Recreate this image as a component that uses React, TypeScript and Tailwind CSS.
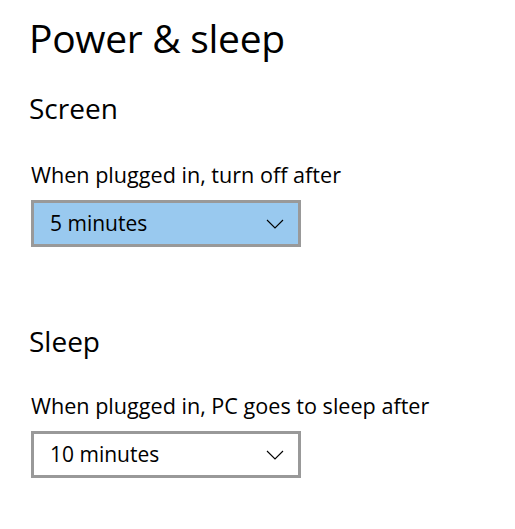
const font = { fontFamily: '"Open Sans", "Noto Sans", sans-serif' };

function Chevron() {
  return (
    <svg width="18" height="10" viewBox="0 0 18 10" fill="none" className="shrink-0">
      <path d="M1 1 L9 9 L17 1" stroke="#000" strokeWidth="1.1" />
    </svg>
  );
}

function Dropdown({ value, active }: { value: string; active?: boolean }) {
  return (
    <div
      className={`flex items-center justify-between w-[270px] h-[47px] border-[3px] border-[#999999] pl-[16px] pr-[14px] ${
        active ? 'bg-[#99c9ef]' : 'bg-white'
      }`}
    >
      <span className="text-[21px] text-black leading-none">{value}</span>
      <Chevron />
    </div>
  );
}

export default function App() {
  return (
    <div className="w-[515px] h-[529px] bg-white text-black pl-[29px] pt-[12px]" style={font}>
      <h1 className="text-[39px] leading-[52px] font-normal tracking-[-0.3px]">Power &amp; sleep</h1>

      <h2 className="mt-[26px] text-[28px] leading-[36px]">Screen</h2>
      <p className="mt-[34px] ml-[2px] text-[21.6px] leading-[30px]">When plugged in, turn off after</p>
      <div className="mt-[10px] ml-[2px]">
        <Dropdown value="5 minutes" active />
      </div>

      <h2 className="mt-[76px] text-[28px] leading-[36px]">Sleep</h2>
      <p className="mt-[32px] ml-[2px] text-[21.6px] leading-[30px]">When plugged in, PC goes to sleep after</p>
      <div className="mt-[10px] ml-[2px]">
        <Dropdown value="10 minutes" />
      </div>
    </div>
  );
}
